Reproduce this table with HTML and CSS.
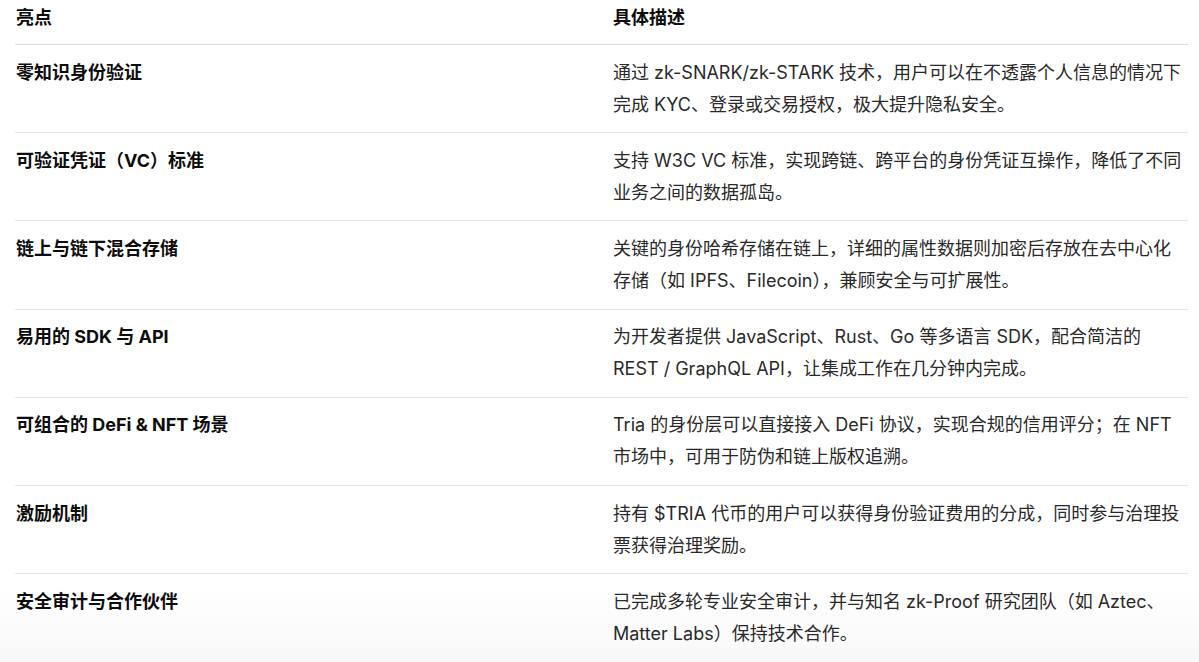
FILE: index.html
```html
<!DOCTYPE html>
<html lang="zh-CN">
<head>
<meta charset="utf-8">
<title>亮点</title>
<link rel="stylesheet" href="styles.css">
</head>
<body>
<div class="wrap">
<table class="features">
  <colgroup><col class="col-a"><col class="col-b"></colgroup>
  <thead>
    <tr><th>亮点</th><th>具体描述</th></tr>
  </thead>
  <tbody>
    <tr><td class="name">零知识身份验证</td><td>通过 zk-SNARK/zk-STARK 技术，用户可以在不透露个人信息的情况下完成 KYC、登录或交易授权，极大提升隐私安全。</td></tr>
    <tr><td class="name">可验证凭证（VC）标准</td><td>支持 W3C VC 标准，实现跨链、跨平台的身份凭证互操作，降低了不同业务之间的数据孤岛。</td></tr>
    <tr><td class="name">链上与链下混合存储</td><td>关键的身份哈希存储在链上，详细的属性数据则加密后存放在去中心化存储（如 IPFS、Filecoin），兼顾安全与可扩展性。</td></tr>
    <tr><td class="name">易用的 SDK 与 API</td><td>为开发者提供 JavaScript、Rust、Go 等多语言 SDK，配合简洁的 REST / GraphQL API，让集成工作在几分钟内完成。</td></tr>
    <tr><td class="name">可组合的 DeFi &amp; NFT 场景</td><td>Tria 的身份层可以直接接入 DeFi 协议，实现合规的信用评分；在 NFT 市场中，可用于防伪和链上版权追溯。</td></tr>
    <tr><td class="name">激励机制</td><td>持有 $TRIA 代币的用户可以获得身份验证费用的分成，同时参与治理投票获得治理奖励。</td></tr>
    <tr><td class="name">安全审计与合作伙伴</td><td>已完成多轮专业安全审计，并与知名 zk-Proof 研究团队（如 Aztec、Matter Labs）保持技术合作。</td></tr>
  </tbody>
</table>
</div>
</body>
</html>
```
FILE: styles.css
```css
html, body {
  margin: 0;
  padding: 0;
}
html {
  background: linear-gradient(to bottom, #ffffff 0px, #ffffff 585px, #f8f8f8 662px) no-repeat;
  background-color: #f8f8f8;
  height: 662px;
}
body {
  font-family: Inter, "Noto Sans CJK SC", sans-serif;
  font-size: 18px;
  line-height: 32px;
  color: #1f1f1f;
  overflow: hidden;
  height: 662px;
}
.wrap {
  padding-left: 15px;
}
.features {
  width: 1173px;
  border-collapse: collapse;
  table-layout: fixed;
}
.col-a { width: 598px; }
.features th,
.features td {
  text-align: left;
  vertical-align: top;
  padding: 11.6px 0 11.6px 0;
  border-bottom: 1px solid #e3e3e3;
}
.features tbody tr:last-child td {
  border-bottom: none;
}
.features th {
  font-weight: 700;
  color: #0d0d0d;
  padding-top: 2px;
  padding-bottom: 10px;
  border-bottom: 1px solid #dcdcdc;
}
.features th:first-child,
.features td:first-child {
  padding-left: 1px;
}
.features td.name {
  font-weight: 700;
  color: #0d0d0d;
}
.features td {
  color: #2a2a2a;
}
```
